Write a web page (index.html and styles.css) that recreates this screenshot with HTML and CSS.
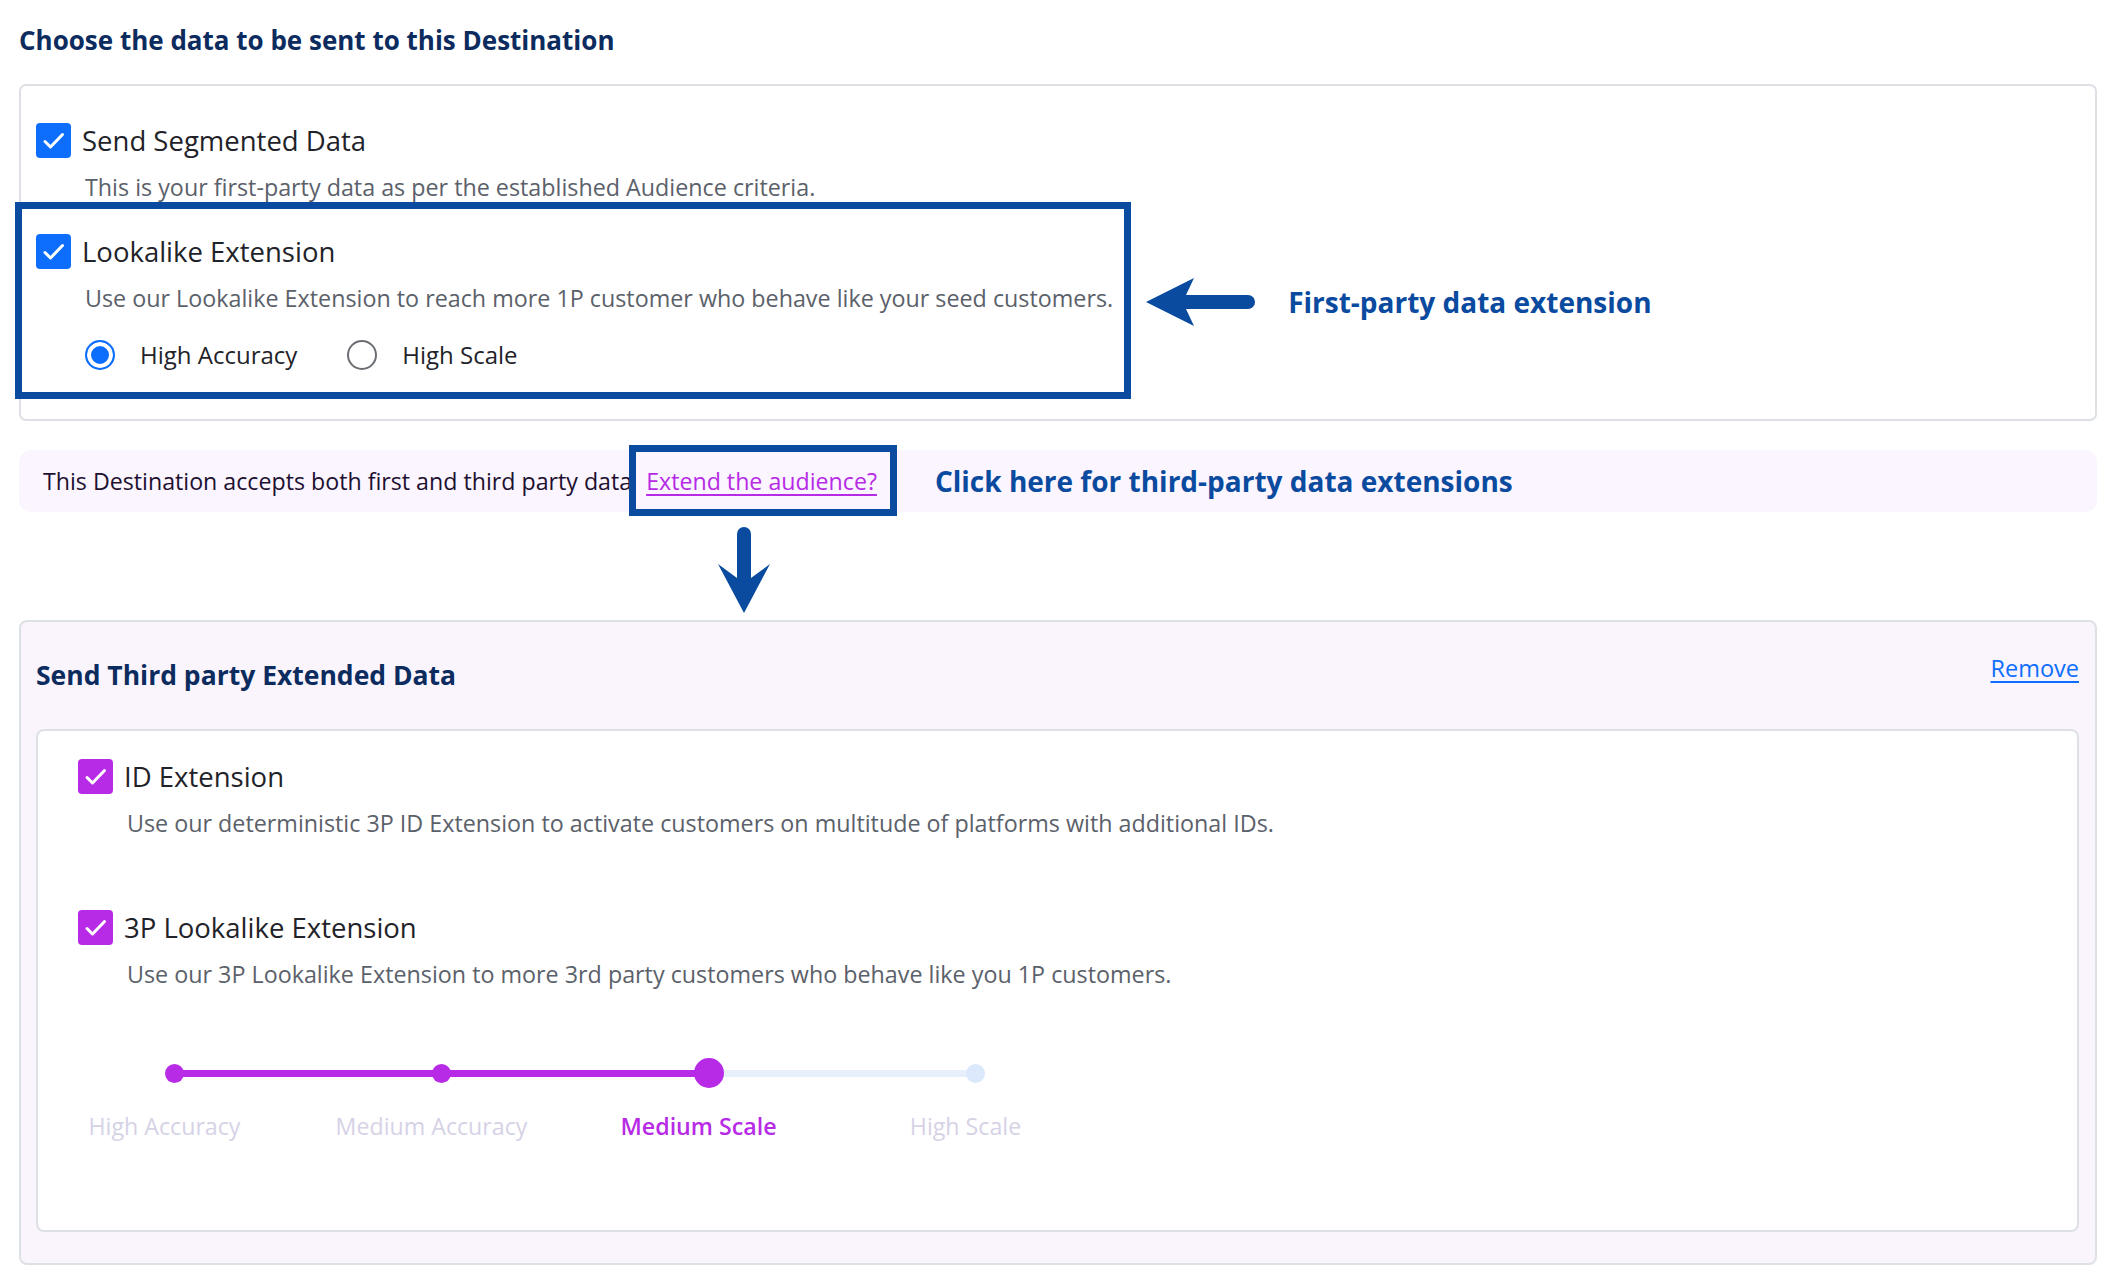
FILE: index.html
```html
<!DOCTYPE html>
<html lang="en">
<head>
  <meta charset="UTF-8" />
  <meta name="viewport" content="width=device-width, initial-scale=1.0"/>
  <title>Destination Data</title>
  <link rel="stylesheet" href="styles.css">
</head>
<body>
  <div class="page">

    <h2 class="section-title">Choose the data to be sent to this Destination</h2>

    <!-- First-party data -->
    <div class="card">
      <div class="option">
        <label class="option-head">
          <span class="checkbox"><svg viewBox="0 0 35 35"><path d="M9 18.5l5.5 5.5L26.5 11.5"/></svg></span>
          <span class="option-label">Send Segmented Data</span>
        </label>
        <p class="option-desc">This is your first-party data as per the established Audience criteria.</p>
      </div>

      <div class="option option-boxed">
        <label class="option-head">
          <span class="checkbox"><svg viewBox="0 0 35 35"><path d="M9 18.5l5.5 5.5L26.5 11.5"/></svg></span>
          <span class="option-label">Lookalike Extension</span>
        </label>
        <p class="option-desc">Use our Lookalike Extension to reach more 1P customer who behave like your seed customers.</p>
        <div class="radio-group">
          <label class="radio"><span class="radio-dot checked"></span>High Accuracy</label>
          <label class="radio"><span class="radio-dot"></span>High Scale</label>
        </div>
        <span class="annot-box box-lookalike"></span>
        <div class="annot-side">
          <svg class="arrow-left" viewBox="0 0 110 50"><path d="M0 25L48 1L40 18H102A7 7 0 0 1 102 32H40L48 49Z"/></svg>
          <span class="annot-text">First-party data extension</span>
        </div>
      </div>
    </div>

    <div class="info-bar">
      <span class="info-text">This Destination accepts both first and third party data</span>
      <span class="annot-target">
        <a href="javascript:void(0)" class="extend-link">Extend the audience?</a>
        <span class="annot-box box-link"></span>
      </span>
      <span class="annot-text annot-inline">Click here for third-party data extensions</span>
    </div>

    <div class="flow-arrow">
      <svg viewBox="0 0 52 86"><path d="M26 86L0 37L19 51V7A7 7 0 0 1 33 7V51L52 37Z"/></svg>
    </div>

    <!-- Third-party data -->
    <div class="card card-third">
      <div class="card-head">
        <h3>Send Third party Extended Data</h3>
        <a href="javascript:void(0)" class="remove-link">Remove</a>
      </div>

      <div class="inner-card">
        <div class="option">
          <label class="option-head">
            <span class="checkbox purple"><svg viewBox="0 0 35 35"><path d="M9 18.5l5.5 5.5L26.5 11.5"/></svg></span>
            <span class="option-label">ID Extension</span>
          </label>
          <p class="option-desc">Use our deterministic 3P ID Extension to activate customers on multitude of platforms with additional IDs.</p>
        </div>

        <div class="option option-spaced">
          <label class="option-head">
            <span class="checkbox purple"><svg viewBox="0 0 35 35"><path d="M9 18.5l5.5 5.5L26.5 11.5"/></svg></span>
            <span class="option-label">3P Lookalike Extension</span>
          </label>
          <p class="option-desc">Use our 3P Lookalike Extension to more 3rd party customers who behave like you 1P customers.</p>
        </div>

        <div class="slider">
          <div class="track"><div class="track-fill" style="width: 66.67%"></div></div>
          <div class="step done"><span class="dot"></span><span class="step-label">High Accuracy</span></div>
          <div class="step done"><span class="dot"></span><span class="step-label">Medium Accuracy</span></div>
          <div class="step active"><span class="dot"></span><span class="step-label">Medium Scale</span></div>
          <div class="step"><span class="dot"></span><span class="step-label">High Scale</span></div>
        </div>
      </div>
    </div>

  </div>
</body>
</html>
```

FILE: styles.css
```css
body {
  margin: 0;
  font-family: 'Open Sans', Lato, sans-serif;
  background: #fff;
  color: #1f2329;
}

.page {
  padding: 23px 15px 0 19px;
}

.section-title {
  margin: 0 0 27px;
  font-size: 26px;
  line-height: 34px;
  font-weight: 700;
  color: #0c2b5e;
}

.card {
  border: 2px solid #dde1e6;
  border-radius: 7px;
  padding: 37px 15px 49px;
}

.option {
  position: relative;
}

.option + .option {
  margin-top: 32px;
}

.option-boxed {
  width: fit-content;
}

.option-head {
  display: flex;
  align-items: center;
  gap: 11px;
  cursor: pointer;
}

.checkbox {
  width: 35px;
  height: 35px;
  flex: none;
  border-radius: 4px;
  background: #0d6efd;
  display: flex;
}

.checkbox.purple {
  background: #b72be6;
}

.checkbox svg {
  width: 35px;
  height: 35px;
}

.checkbox path {
  fill: none;
  stroke: #fff;
  stroke-width: 3;
  stroke-linecap: round;
  stroke-linejoin: round;
}

.option-label {
  font-size: 27.5px;
  line-height: 35px;
  color: #1f2329;
}

.option-desc {
  margin: 14px 0 0 49px;
  font-size: 23.3px;
  line-height: 30px;
  color: #5b616a;
}

.radio-group {
  display: flex;
  gap: 50px;
  margin: 27px 0 0 49px;
}

.radio {
  display: flex;
  align-items: center;
  gap: 25px;
  font-size: 24px;
  line-height: 30px;
  color: #1f2329;
  cursor: pointer;
}

.radio-dot {
  width: 30px;
  height: 30px;
  box-sizing: border-box;
  border: 2px solid #6b6e72;
  border-radius: 50%;
  background: #fff;
}

.radio-dot.checked {
  border-color: #0d6efd;
  background: #0d6efd;
  box-shadow: inset 0 0 0 4px #fff;
}

/* annotation overlays */
.annot-box {
  position: absolute;
  border: 7px solid #0a4a9f;
  pointer-events: none;
}

.box-lookalike {
  inset: -32px -18px -29px -21px;
}

.annot-side {
  position: absolute;
  left: calc(100% + 33px);
  top: 50%;
  transform: translateY(-50%);
  display: flex;
  align-items: center;
  gap: 32px;
  white-space: nowrap;
}

.arrow-left {
  width: 110px;
  height: 50px;
  fill: #0a4a9f;
}

.annot-text {
  font-size: 28px;
  font-weight: 700;
  color: #0a4a9f;
}

.info-bar {
  margin-top: 29px;
  height: 62px;
  padding: 0 24px;
  border-radius: 12px;
  background: #faf5fe;
  display: flex;
  align-items: center;
  font-size: 23.2px;
  line-height: 30px;
  color: #1e1030;
}

.annot-target {
  position: relative;
  margin-left: 14px;
}

.box-link {
  inset: -21px -20px -20px -17px;
}

.extend-link {
  color: #b72be6;
  text-underline-offset: 4px;
}

.annot-inline {
  margin-left: 58px;
}

.flow-arrow {
  height: 108px;
  box-sizing: border-box;
  padding: 15px 0 0 699px;
}

.flow-arrow svg {
  display: block;
  width: 52px;
  height: 86px;
  fill: #0a4a9f;
}

.card-third {
  background: #faf5fd;
  border-radius: 8px;
  padding: 36px 16px 31px 15px;
}

.card-head {
  display: flex;
  justify-content: space-between;
  align-items: flex-start;
}

.card-head h3 {
  margin: 0;
  font-size: 26.5px;
  line-height: 34px;
  font-weight: 700;
  color: #0c2b5e;
}

.remove-link {
  font-size: 23.5px;
  line-height: 20px;
  color: #0d6efd;
  text-underline-offset: 4px;
}

.inner-card {
  margin-top: 37px;
  background: #fff;
  border: 2px solid #dde1e6;
  border-radius: 8px;
  padding: 28px 40px 89px;
}

.option-spaced.option-spaced {
  margin-top: 72px;
}

.slider {
  position: relative;
  display: grid;
  grid-template-columns: repeat(4, 267px);
  margin: 69px 0 0 -37px;
}

.track {
  position: absolute;
  left: 133px;
  width: 801px;
  top: 12px;
  height: 7px;
  border-radius: 4px;
  background: #e7effc;
}

.track-fill {
  height: 100%;
  border-radius: 4px;
  background: #b72be6;
}

.step {
  position: relative;
  display: flex;
  flex-direction: column;
  align-items: center;
}

.dot {
  width: 30px;
  height: 30px;
  display: flex;
  align-items: center;
  justify-content: center;
}

.dot::after {
  content: "";
  width: 19px;
  height: 19px;
  border-radius: 50%;
  background: #dce8fb;
}

.step.done .dot::after {
  background: #b72be6;
}

.step.active .dot::after {
  width: 30px;
  height: 30px;
  background: #b72be6;
}

.step-label {
  margin: 23px 20px 0 0;
  font-size: 23.2px;
  line-height: 30px;
  color: #d6d2e6;
  white-space: nowrap;
}

.step.active .step-label {
  font-weight: 600;
  color: #b72be6;
}
```
